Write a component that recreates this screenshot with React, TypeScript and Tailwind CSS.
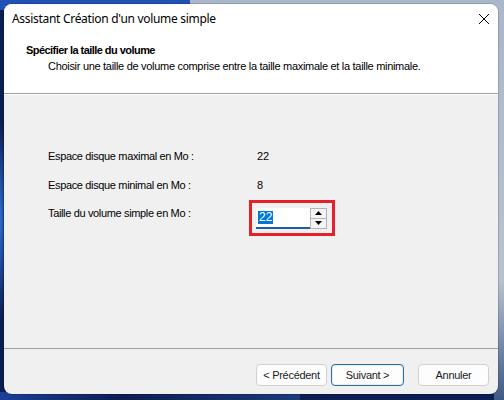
import React from "react";

const sans = "font-['Liberation_Sans',Arial,sans-serif]";

function SpinArrow({ up }: { up?: boolean }) {
  return (
    <svg width="7" height="4" viewBox="0 0 7 4" className="block">
      {up ? <path d="M0 4 L3.5 0 L7 4 Z" fill="#000" /> : <path d="M0 0 L7 0 L3.5 4 Z" fill="#000" />}
    </svg>
  );
}

function Row({ label, children }: { label: string; children: React.ReactNode }) {
  return (
    <div className="flex h-[29px] items-center">
      <div className="w-[209px] text-[11px] tracking-[-0.35px] text-black">{label}</div>
      <div className="text-[11px] text-black">{children}</div>
    </div>
  );
}

function Button({ children, focused }: { children: React.ReactNode; focused?: boolean }) {
  return (
    <button
      type="button"
      className={
        "flex h-[22px] items-center justify-center rounded-[4px] border bg-[#fdfdfd] text-[11px] tracking-[-0.3px] text-[#1b1b1b] " +
        (focused ? "w-[73px] border-[#2d6c9c] shadow-[inset_0_0_0_1px_#e6eef5]" : "w-[71px] border-[#d0d0d0]")
      }
    >
      {children}
    </button>
  );
}

export default function App() {
  return (
    <div className={"relative h-[400px] w-[504px] overflow-hidden bg-[#0c1d52] " + sans}>
      {/* desktop behind the dialog */}
      <div className="absolute left-0 top-0 h-[10px] w-[190px] bg-[#1f52b4]" />
      <div className="absolute left-[190px] top-0 h-[10px] w-[314px] bg-[#a8b8ca]" />
      <div className="absolute right-0 top-0 h-[400px] w-[10px] bg-[linear-gradient(#a8b8ca,#b7c2cd_70%,#3f5a86)]" />
      <div className="absolute left-0 top-[120px] h-[200px] w-[8px] bg-[radial-gradient(ellipse_at_left,#2f6fd8_0%,#0c1d52_70%)]" />
      <div className="absolute bottom-0 left-0 h-[8px] w-[300px] bg-[linear-gradient(90deg,#1c3f9a,#0c1d52_40%,#1d3a7a)]" />

      {/* dialog */}
      <div className="absolute left-[4px] top-[4px] flex h-[390px] w-[494px] flex-col overflow-hidden rounded-[8px] bg-[#f0f0f0] shadow-[0_0_0_1px_rgba(0,0,0,0.15)]">
        <div className="flex h-[30px] shrink-0 items-center justify-between bg-white pl-[8px] pr-[6px]">
          <span className="font-['Noto_Sans',sans-serif] text-[12px] tracking-[-0.3px] text-black">
            Assistant Création d'un volume simple
          </span>
          <svg width="12" height="12" viewBox="0 0 12 12" className="mr-[2px]">
            <path d="M1 1 L11 11 M11 1 L1 11" stroke="#000" strokeWidth="1" />
          </svg>
        </div>

        <div className="flex h-[59px] shrink-0 flex-col bg-white pl-[22px] pt-[10px]">
          <div className="text-[11px] font-bold leading-[13px] tracking-[-0.55px] text-black">
            Spécifier la taille du volume
          </div>
          <div className="mt-[3px] pl-[22px] text-[11px] leading-[13px] tracking-[-0.3px] text-black">
            Choisir une taille de volume comprise entre la taille maximale et la taille minimale.
          </div>
        </div>
        <div className="h-[1px] shrink-0 bg-[#a0a0a0]" />
        <div className="h-[1px] shrink-0 bg-white" />

        <div className="flex h-[253px] shrink-0 flex-col pl-[44px] pt-[47px]">
          <Row label="Espace disque maximal en Mo :">22</Row>
          <Row label="Espace disque minimal en Mo :">8</Row>
          <div className="flex items-start">
            <div className="mt-[7px] w-[201px] text-[11px] leading-[13px] tracking-[-0.35px] text-black">
              Taille du volume simple en Mo :
            </div>
            <div className="flex h-[36px] w-[86px] items-center border-[3px] border-[#e3202b] pl-[4px]">
              <div className="flex h-[21px] items-stretch">
                <div className="flex w-[54px] items-center border-b-2 border-[#1d5fa0] bg-white pl-[2px]">
                  <span className="bg-[#0078d7] px-[1px] text-[12px] leading-[13px] text-white">22</span>
                </div>
                <div className="flex w-[17px] flex-col border border-[#b4b4b4] bg-[#f4f4f4]">
                  <div className="flex flex-1 items-center justify-center border-b border-[#b4b4b4]">
                    <SpinArrow up />
                  </div>
                  <div className="flex flex-1 items-center justify-center">
                    <SpinArrow />
                  </div>
                </div>
              </div>
            </div>
          </div>
        </div>

        <div className="h-[1px] shrink-0 bg-[#a0a0a0]" />
        <div className="flex flex-1 items-start justify-end pr-[9px] pt-[15px]">
          <div className="flex gap-[4px]">
            <Button>&lt; Précédent</Button>
            <Button focused>Suivant &gt;</Button>
          </div>
          <div className="ml-[14px]">
            <Button>Annuler</Button>
          </div>
        </div>
      </div>
    </div>
  );
}
